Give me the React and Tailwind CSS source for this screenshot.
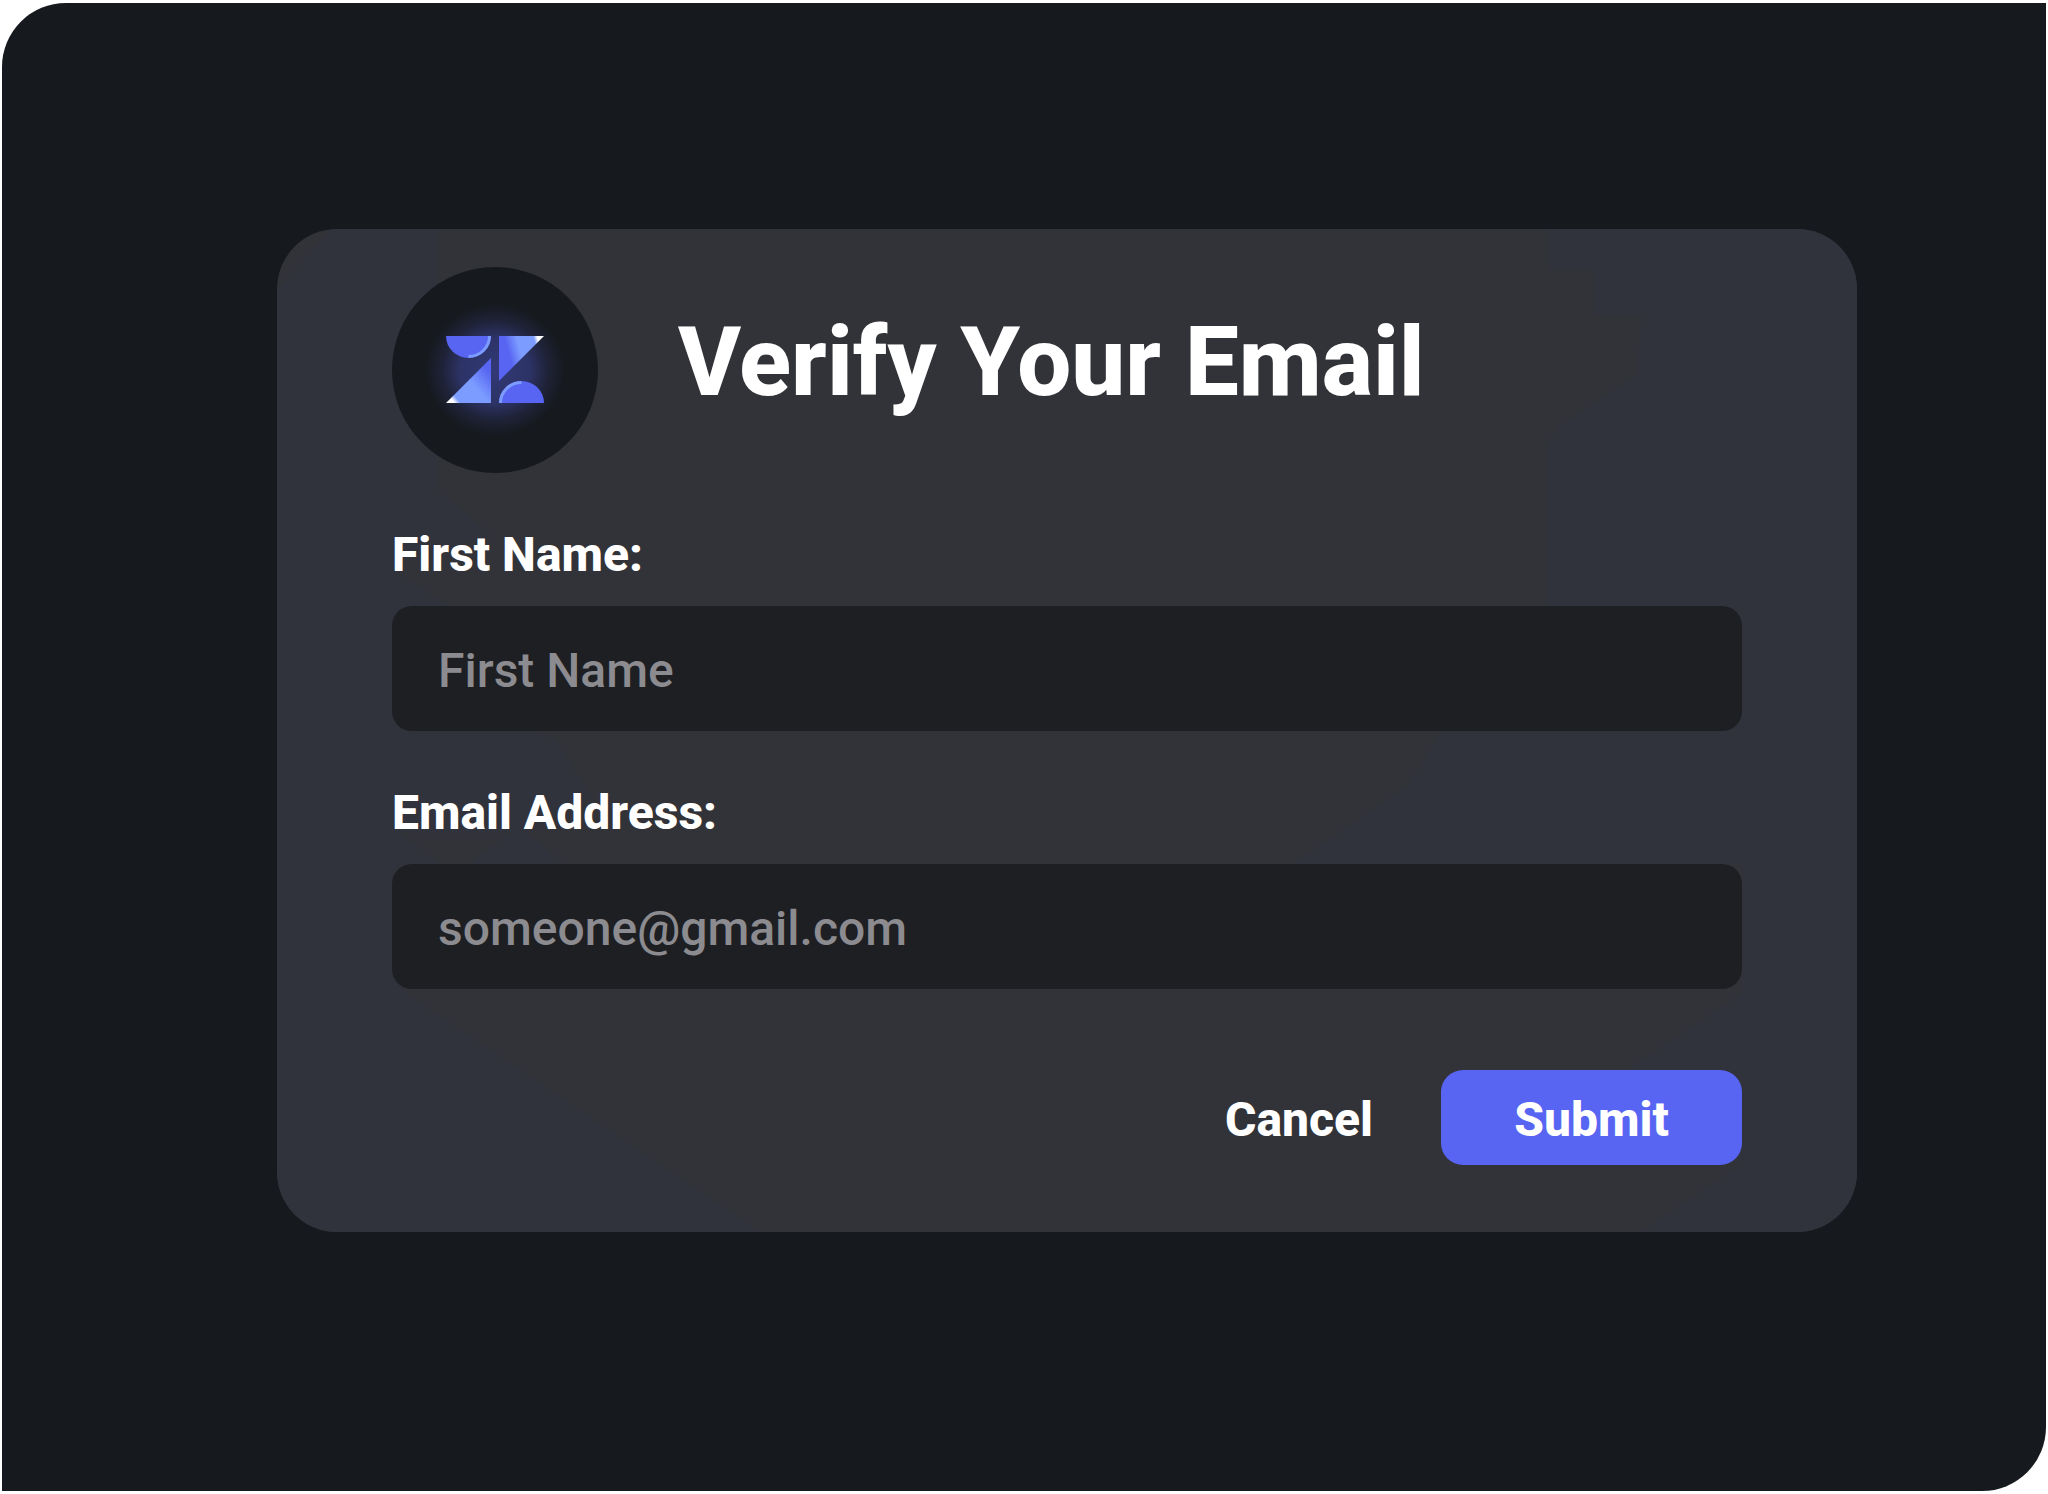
import React, { useState } from 'react';

const Logo = () => (
  <svg viewBox="0 0 206 206" className="w-[206px] h-[206px] shrink-0" role="img" aria-label="Logo">
    <defs>
      <radialGradient id="glow">
        <stop offset="0" stopColor="#5865f2" stopOpacity="0.42" />
        <stop offset="0.5" stopColor="#5865f2" stopOpacity="0.34" />
        <stop offset="0.75" stopColor="#5865f2" stopOpacity="0.13" />
        <stop offset="1" stopColor="#5865f2" stopOpacity="0" />
      </radialGradient>
      <linearGradient id="upper" gradientUnits="userSpaceOnUse" x1="106" y1="82" x2="151" y2="70">
        <stop offset="0.2" stopColor="#5865f2" />
        <stop offset="0.45" stopColor="#7c9cff" />
        <stop offset="0.8" stopColor="#7c9cff" />
        <stop offset="0.88" stopColor="#ffffff" />
      </linearGradient>
      <linearGradient id="lower" gradientUnits="userSpaceOnUse" x1="99" y1="98" x2="55" y2="136">
        <stop offset="0.1" stopColor="#5865f2" />
        <stop offset="0.45" stopColor="#7c9cff" />
        <stop offset="0.82" stopColor="#7c9cff" />
        <stop offset="0.9" stopColor="#ffffff" />
      </linearGradient>
    </defs>
    <circle cx="103" cy="103" r="103" fill="#16191d" />
    <ellipse cx="103" cy="103" rx="70" ry="66" fill="url(#glow)" />
    <path d="M54 69H99A22.5 22 0 0 1 54 69Z" fill="#5865f2" />
    <path d="M97.5 69A21 20.5 0 0 1 76.5 89.5" fill="none" stroke="#7c9cff" strokeWidth="3" />
    <path d="M107 69H152L107 114Z" fill="url(#upper)" />
    <path d="M99 91V136H54Z" fill="url(#lower)" />
    <path d="M107 136A22.5 22 0 0 1 152 136Z" fill="#5865f2" />
    <path d="M108.5 136A21 20.5 0 0 1 129.5 115.5" fill="none" stroke="#7c9cff" strokeWidth="3" />
  </svg>
);

// bluish facets on both sides of the card
const CardBackdrop = () => (
  <svg
    viewBox="0 0 1580 1001"
    preserveAspectRatio="none"
    aria-hidden="true"
    className="absolute inset-0 -z-10 h-full w-full"
  >
    <path
      fill="#30323c"
      d="M55 0H160V260L216 307L120 330V343L170 375L256 501L279 510L303 550L316 568L248 602L287 633H193L234 602H120L162 633L126 761L483 1001H0V60Z"
    />
    <path
      fill="#30323c"
      d="M1272 0V41H1317V86H1365L1360 146L1281 198L1271 214V374L1166 501L1131 556L1018 633H1465V764L1355 836L1462 936L1365 1001H1580V0Z"
    />
  </svg>
);

const Field = ({ id, label, ...props }) => (
  <div>
    <label htmlFor={id} className="block text-5xl font-extrabold text-white">
      {label}
    </label>
    <input
      id={id}
      className="mt-[27px] block h-[125px] w-full rounded-[20px] bg-[#1e1f23] px-[46px] pt-1 text-5xl font-medium text-white placeholder:text-[#8b8b90] outline-none"
      {...props}
    />
  </div>
);

const App = () => {
  const [firstName, setFirstName] = useState('');
  const [email, setEmail] = useState('');

  const handleCancel = () => {
    setFirstName('');
    setEmail('');
  };

  return (
    <div className="min-h-screen bg-white px-0.5 py-[3px] flex font-['Roboto',sans-serif]">
      <main className="flex-1 rounded-tl-[64px] rounded-br-[64px] bg-[#16191d] pt-[226px] pr-[189px] pl-[275px]">
        <form
          onSubmit={(e) => e.preventDefault()}
          className="relative isolate overflow-hidden rounded-[60px] bg-[#323338] px-[115px] pt-[38px] pb-[67px]"
        >
          <CardBackdrop />
          <div className="flex items-center gap-20">
            <Logo />
            <h1 className="pb-4 text-8xl font-extrabold text-white">Verify Your Email</h1>
          </div>
          <div className="mt-[58px] flex flex-col gap-[58px]">
            <Field
              id="firstName"
              label="First Name:"
              type="text"
              placeholder="First Name"
              value={firstName}
              onChange={(e) => setFirstName(e.target.value)}
            />
            <Field
              id="email"
              label="Email Address:"
              type="email"
              placeholder="someone@gmail.com"
              value={email}
              onChange={(e) => setEmail(e.target.value)}
            />
          </div>
          <div className="mt-[81px] flex justify-end gap-[68px] text-5xl font-extrabold text-white">
            <button type="button" onClick={handleCancel} className="pt-1">Cancel</button>
            <button type="submit" className="h-[95px] w-[301px] rounded-[22px] bg-[#5865f2] pt-1">Submit</button>
          </div>
        </form>
      </main>
    </div>
  );
};

export default App;
